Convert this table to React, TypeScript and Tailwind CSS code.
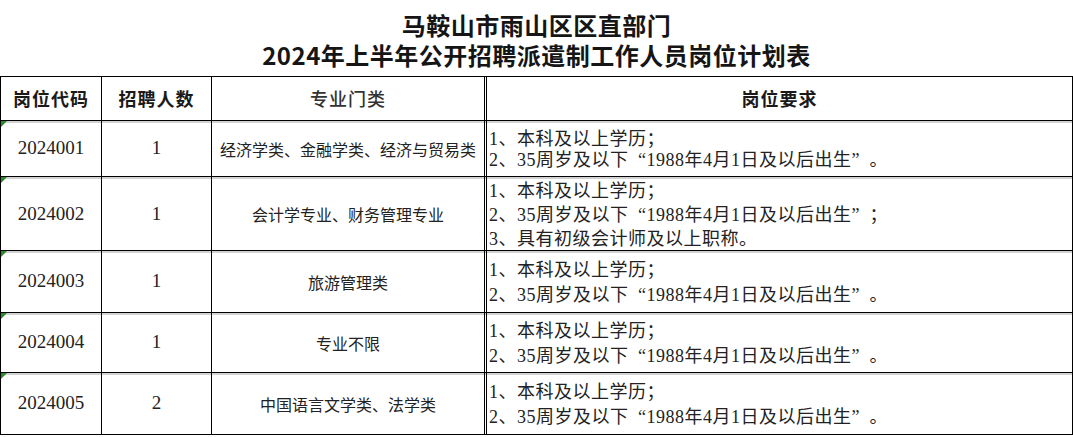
import React from "react";

type Row = {
  code: string;
  num: string;
  major: string;
  reqs: string[];
  height: string;
  lead: string;
};

const ROWS: Row[] = [
  {
    code: "2024001",
    num: "1",
    major: "经济学类、金融学类、经济与贸易类",
    reqs: ["1、本科及以上学历；", "2、35周岁及以下“1988年4月1日及以后出生”。"],
    height: "h-[56px]",
    lead: "leading-[21px]",
  },
  {
    code: "2024002",
    num: "1",
    major: "会计学专业、财务管理专业",
    reqs: [
      "1、本科及以上学历；",
      "2、35周岁及以下“1988年4月1日及以后出生”；",
      "3、具有初级会计师及以上职称。",
    ],
    height: "h-[74px]",
    lead: "leading-[24px]",
  },
  {
    code: "2024003",
    num: "1",
    major: "旅游管理类",
    reqs: ["1、本科及以上学历；", "2、35周岁及以下“1988年4月1日及以后出生”。"],
    height: "h-[62px]",
    lead: "leading-[25px]",
  },
  {
    code: "2024004",
    num: "1",
    major: "专业不限",
    reqs: ["1、本科及以上学历；", "2、35周岁及以下“1988年4月1日及以后出生”。"],
    height: "h-[60px]",
    lead: "leading-[25px]",
  },
  {
    code: "2024005",
    num: "2",
    major: "中国语言文学类、法学类",
    reqs: ["1、本科及以上学历；", "2、35周岁及以下“1988年4月1日及以后出生”。"],
    height: "h-[62px]",
    lead: "leading-[25px]",
  },
];

// full-width quote boxes, like the spreadsheet font draws them
const ReqLine = ({ text }: { text: string }) => (
  <div className="whitespace-nowrap">
    {text.split(/([“”])/).map((seg, i) =>
      seg === "“" ? (
        <span key={i} className="inline-block w-[18px] text-right">
          “
        </span>
      ) : seg === "”" ? (
        <span key={i} className="inline-block w-[18px] text-left">
          ”
        </span>
      ) : (
        <span key={i}>{seg}</span>
      )
    )}
  </div>
);

const App = () => {
  return (
    <div className="w-[1073px] bg-white text-[#222]">
      <div className="flex h-[76px] flex-col items-center pt-[10px] font-['Noto_Sans_CJK_SC',sans-serif] text-[24px] font-bold leading-[30px] tracking-[0.5px] text-[#151515]">
        <div>马鞍山市雨山区区直部门</div>
        <div>2024年上半年公开招聘派遣制工作人员岗位计划表</div>
      </div>

      <div className="border border-black">
        <div className="grid h-[43px] grid-cols-[101px_110px_272px_1fr] font-['Noto_Sans_CJK_SC',sans-serif] text-[18px] tracking-[1px] text-[#1a1a1a]">
          <div className="flex items-center justify-center border-r border-black font-bold">岗位代码</div>
          <div className="flex items-center justify-center border-r border-black font-bold">招聘人数</div>
          <div className="flex items-center justify-center font-medium text-[#333]">专业门类</div>
          <div className="flex items-center justify-center border-l-[3px] border-double border-black font-semibold">
            岗位要求
          </div>
        </div>

        {ROWS.map((row) => (
          <div
            key={row.code}
            className={`grid grid-cols-[101px_110px_272px_1fr] border-t border-black shadow-[inset_0_2px_0_#d2d2d2] ${row.height}`}
          >
            <div className="relative flex items-center justify-center border-r border-black font-['Liberation_Serif','Noto_Sans_CJK_SC',serif] text-[19px]">
              <span className="absolute left-0 top-0 h-0 w-0 border-r-[6px] border-t-[6px] border-r-transparent border-t-[#2a8a2a]" />
              {row.code}
            </div>
            <div className="flex items-center justify-center border-r border-black font-['Liberation_Serif','Noto_Sans_CJK_SC',serif] text-[19px]">
              {row.num}
            </div>
            <div className="flex items-center justify-center font-['Noto_Sans_CJK_SC',sans-serif] text-[16px]">
              {row.major}
            </div>
            <div
              className={`flex flex-col justify-center border-l-[3px] border-double border-black pl-[2px] pt-[2px] font-['Liberation_Serif','Noto_Sans_CJK_SC',serif] text-[18px] tracking-[0.5px] ${row.lead}`}
            >
              {row.reqs.map((r) => (
                <ReqLine key={r} text={r} />
              ))}
            </div>
          </div>
        ))}
      </div>
    </div>
  );
};

export default App;
